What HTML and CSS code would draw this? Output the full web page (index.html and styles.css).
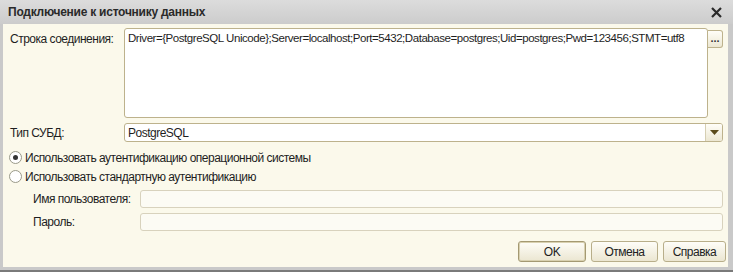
FILE: index.html
```html
<!DOCTYPE html>
<html>
<head>
<meta charset="utf-8">
<link rel="stylesheet" href="styles.css">
</head>
<body>
<div class="window">
  <div class="titlebar">
    <span class="title">Подключение к источнику данных</span>
    <svg class="close" width="11" height="11" viewBox="0 0 11 11"><path d="M1 1 L10 10 M10 1 L1 10" stroke="#2a2a2a" stroke-width="2.2"/></svg>
  </div>
  <div class="body">
    <div class="row conn">
      <div class="label">Строка соединения:</div>
      <div class="textarea">Driver={PostgreSQL Unicode};Server=localhost;Port=5432;Database=postgres;Uid=postgres;Pwd=123456;STMT=utf8</div>
      <div class="dots">...</div>
    </div>
    <div class="row dbms">
      <div class="label">Тип СУБД:</div>
      <div class="combo"><span class="val">PostgreSQL</span><span class="drop"><svg width="9" height="5" viewBox="0 0 9 5"><path d="M0 0 H9 L4.5 5 Z" fill="#5a4a1a"/></svg></span></div>
    </div>
    <div class="radio-row r1"><span class="radio checked"></span><span>Использовать аутентификацию операционной системы</span></div>
    <div class="radio-row r2"><span class="radio"></span><span>Использовать стандартную аутентификацию</span></div>
    <div class="row sub u">
      <div class="label2">Имя пользователя:</div>
      <div class="input"></div>
    </div>
    <div class="row sub p">
      <div class="label2">Пароль:</div>
      <div class="input"></div>
    </div>
    <div class="buttons">
      <div class="btn ok">OK</div>
      <div class="btn cancel">Отмена</div>
      <div class="btn help">Справка</div>
    </div>
  </div>
</div>
</body>
</html>
```
FILE: styles.css
```css
html, body { margin: 0; padding: 0; }
body { width: 733px; height: 272px; overflow: hidden; font-family: "Liberation Sans", Arial, sans-serif; font-size: 12px; letter-spacing: -0.5px; color: #1e1e1e; }
.window { width: 733px; height: 272px; box-sizing: border-box; background: #c9c9c9; border-bottom: 2px solid #7a7a7a; display: flex; flex-direction: column; }
.titlebar { height: 24px; flex: none; display: flex; align-items: center; justify-content: space-between; padding: 0 11px 0 8px; background: linear-gradient(#dcdcdc, #cccccc); }
.title { font-weight: bold; font-size: 12px; letter-spacing: -0.25px; color: #2a2a2a; }
.close { display: block; }
.body { flex: 1; margin: 0 5px 3px 3px; background: #fbf9eb; display: flex; flex-direction: column; padding: 4px 0 0 0; box-sizing: border-box; }
.row { display: flex; align-items: flex-start; }
.label { width: 121px; padding-left: 7px; box-sizing: border-box; flex: none; }
.conn .label { padding-top: 4px; }
.textarea { width: 584px; height: 90px; box-sizing: border-box; background: #fff; border: 1px solid #bdb28c; border-radius: 3px; padding: 3px 3px; flex: none; white-space: nowrap; overflow: hidden; font-size: 11.5px; letter-spacing: -0.45px; }
.dots { width: 15px; height: 18px; margin-top: 2px; box-sizing: border-box; border: 1px solid #bdb28c; border-left: none; border-radius: 0 3px 3px 0; background: linear-gradient(#fffef8, #ece7d2); font-weight: bold; text-align: center; line-height: 14px; color: #333; font-size: 11px; letter-spacing: 0; }
.dbms { margin-top: 5px; align-items: center; }
.combo { width: 599px; height: 19px; box-sizing: border-box; border: 1px solid #bdb28c; border-radius: 3px; background: #fff; display: flex; align-items: center; justify-content: space-between; }
.val { padding-left: 3px; }
.drop { width: 16px; height: 17px; border-left: 1px solid #d6cfb3; background: linear-gradient(#fffef8, #ece7d2); display: flex; align-items: center; justify-content: center; border-radius: 0 2px 2px 0; }
.radio-row { display: flex; align-items: center; height: 19px; padding-left: 6px; }
.r1 { margin-top: 6px; }
.r2 { margin-top: 0px; }
.radio { width: 11px; height: 11px; border: 1px solid #9a9a8a; border-radius: 50%; background: #fff; margin-right: 3px; position: relative; box-sizing: content-box; }
.radio.checked::after { content: ""; position: absolute; left: 3px; top: 3px; width: 5px; height: 5px; border-radius: 50%; background: #333; }
.sub { align-items: center; }
.u { margin-top: 4px; }
.p { margin-top: 5px; }
.label2 { width: 137px; padding-left: 30px; box-sizing: border-box; flex: none; }
.input { width: 583px; height: 18px; box-sizing: border-box; border: 1px solid #d8d2bd; border-radius: 3px; background: #fcfbf4; }
.buttons { display: flex; justify-content: flex-end; gap: 5px; margin-top: 10px; padding-right: 2px; }
.btn { height: 21px; box-sizing: border-box; border: 1px solid #b8ae8a; border-radius: 3px; background: linear-gradient(#fefdf8, #ebe6d1); display: flex; align-items: center; justify-content: center; color: #222; }
.ok { width: 68px; border-color: #a49972; box-shadow: inset 0 0 0 1px #d9d1b0; }
.cancel { width: 67px; }
.help { width: 63px; }
```
